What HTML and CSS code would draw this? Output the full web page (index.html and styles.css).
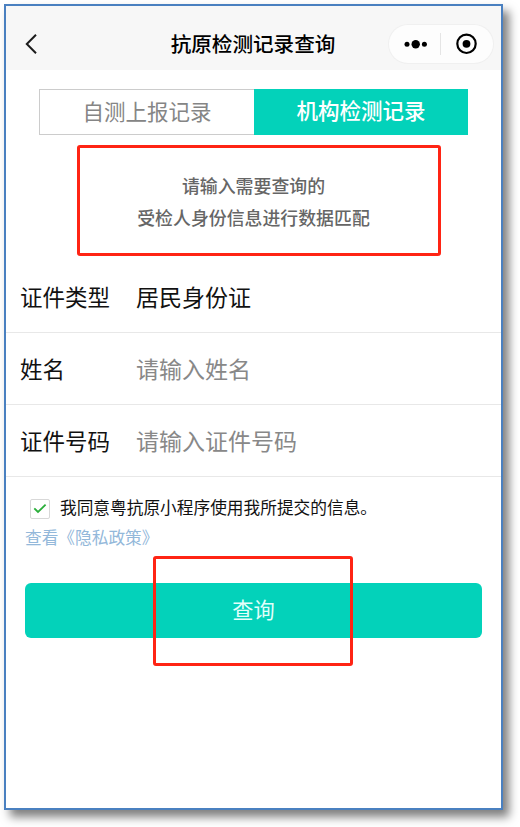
FILE: index.html
```html
<!DOCTYPE html>
<html lang="zh-CN">
<head>
<meta charset="utf-8">
<title>抗原检测记录查询</title>
<link rel="stylesheet" href="styles.css">
</head>
<body>
<main class="phone">
  <header class="navbar">
    <svg class="back" width="14" height="22" viewBox="0 0 14 22"><path d="M11 1.7 1.8 11l9.2 9.3"/></svg>
    <h1 class="title">抗原检测记录查询</h1>
    <div class="capsule">
      <svg width="104" height="38" viewBox="0 0 104 38">
        <circle cx="18" cy="19.2" r="2.5"/><circle cx="26.7" cy="19.2" r="4.2"/><circle cx="35.4" cy="19.2" r="2.5"/>
        <path class="divider" d="M51.5 8v22"/>
        <circle class="ring" cx="77.5" cy="18.8" r="9.2"/><circle cx="77.5" cy="18.8" r="3.9"/>
      </svg>
    </div>
  </header>
  <nav class="tabs">
    <div class="tab">自测上报记录</div>
    <div class="tab tab-active">机构检测记录</div>
  </nav>
  <section class="notice">
    <p>请输入需要查询的</p>
    <p>受检人身份信息进行数据匹配</p>
  </section>
  <form class="form">
    <div class="row"><span class="label">证件类型</span><span class="value">居民身份证</span></div>
    <div class="row"><span class="label">姓名</span><span class="value placeholder">请输入姓名</span></div>
    <div class="row"><span class="label">证件号码</span><span class="value placeholder">请输入证件号码</span></div>
  </form>
  <div class="consent">
    <span class="checkbox"><svg width="14" height="11" viewBox="0 0 14 11"><path d="M1.3 5.3 5 9l7.6-7.3"/></svg></span>
    <span>我同意粤抗原小程序使用我所提交的信息。</span>
  </div>
  <a class="policy">查看《隐私政策》</a>
  <div class="submit">查询<span class="highlight"></span></div>
</main>
</body>
</html>
```
FILE: styles.css
```css
* { box-sizing: border-box; margin: 0; padding: 0; }
body {
  background: #fff;
  width: 520px;
  height: 827px;
  overflow: hidden;
  font-family: "Noto Sans CJK SC", sans-serif;
  color: #111;
}
.phone {
  width: 499px;
  height: 806px;
  margin: 4px 0 0 4px;
  border: 2px solid #4a80c0;
  background: #fff;
  box-shadow: 6px 7px 9px rgba(0, 0, 0, .5);
}
.navbar {
  height: 64px;
  padding: 12px 8px 0 19px;
  display: flex;
  align-items: center;
  justify-content: space-between;
  background: #f7f7f7;
}
.back { fill: none; stroke: #1c1c1c; stroke-width: 2; }
.title {
  margin: 0 0 2px 78px;
  font-size: 20.6px;
  line-height: 30px;
  font-weight: 500;
  color: #000;
}
.capsule {
  width: 104px;
  height: 38px;
  border-radius: 19px;
  background: #fdfdfd;
  box-shadow: 0 0 0 1px #f0f0f0;
}
.capsule svg { display: block; }
.divider { stroke: #e5e5e5; stroke-width: 1; }
.ring { fill: none; stroke: #000; stroke-width: 2.2; }
.tabs {
  display: flex;
  width: 429px;
  height: 46px;
  margin: 19px 0 0 33px;
}
.tab {
  flex: 1;
  border: 1px solid #ccc;
  border-right: 0;
  text-align: center;
  font-size: 21.5px;
  line-height: 42px;
  color: #858585;
}
.tab-active {
  border: 0;
  background: #03d2ba;
  color: #fff;
  font-weight: 500;
}
.notice {
  width: 364px;
  height: 111px;
  margin: 10px 0 0 71px;
  padding-top: 21px;
  padding-right: 11px;
  border: 3px solid #ff2414;
  border-radius: 3px;
  text-align: center;
  font-size: 17.9px;
  font-weight: 500;
  line-height: 32px;
  color: #666;
}
.form { margin-top: 5px; }
.row {
  height: 72px;
  display: flex;
  align-items: center;
  padding-left: 14px;
  border-bottom: 1px solid #e8e8e8;
  font-size: 22.5px;
  color: #111;
}
.label { width: 116px; padding-bottom: 2px; }
.value { font-size: 23px; padding-bottom: 2px; }
.placeholder { color: #888; }
.consent {
  display: flex;
  align-items: center;
  gap: 10px;
  height: 24px;
  margin: 18px 0 0 24px;
  font-size: 16.7px;
}
.checkbox {
  display: flex;
  align-items: center;
  justify-content: center;
  width: 20px;
  height: 20px;
  margin-top: 3px;
  border: 1px solid #d8d8d8;
  border-radius: 2px;
}
.checkbox path { fill: none; stroke: #2aae3a; stroke-width: 1.8; }
.policy {
  display: block;
  margin: 6px 0 0 19px;
  font-size: 16.7px;
  line-height: 24px;
  color: #93b8da;
}
.submit {
  position: relative;
  width: 457px;
  height: 55px;
  margin: 34px 0 0 19px;
  border-radius: 6px;
  background: #03d2ba;
  color: #e2fffb;
  text-align: center;
  font-size: 21.2px;
  line-height: 52px;
}
.highlight {
  position: absolute;
  left: 128px;
  top: -27px;
  width: 200px;
  height: 110px;
  border: 3px solid #ff2414;
  border-radius: 3px;
}
```
